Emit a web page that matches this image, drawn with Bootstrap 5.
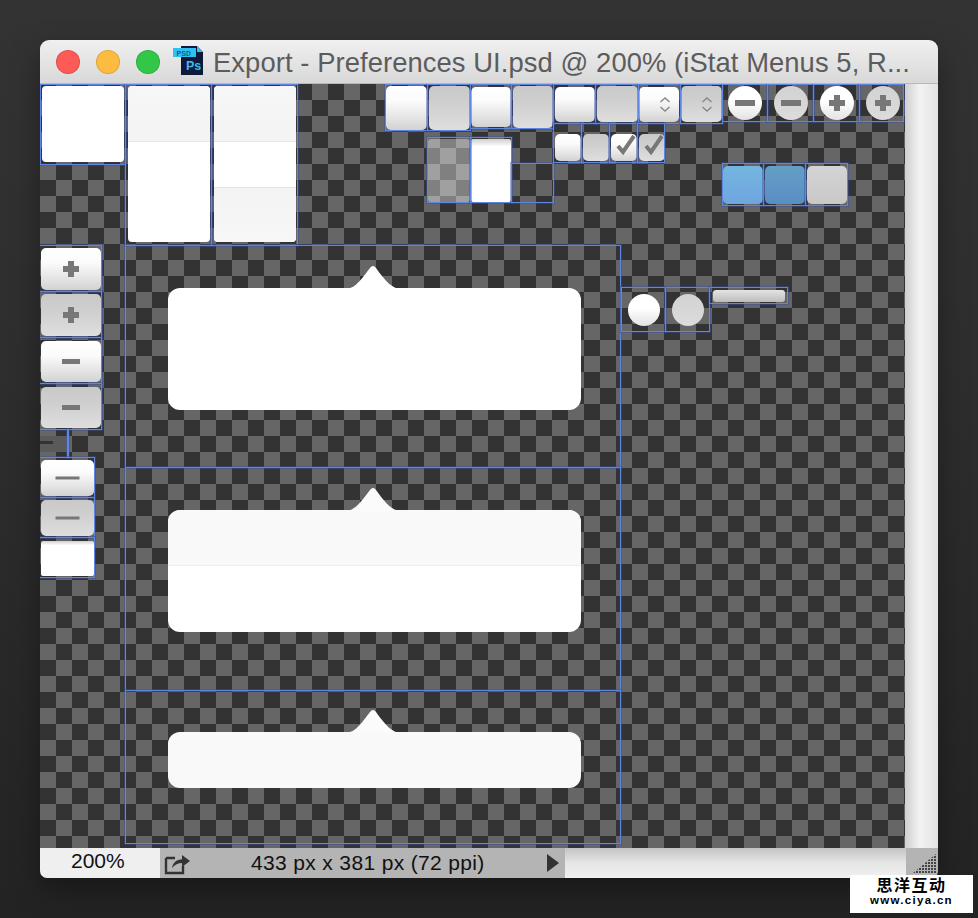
<!DOCTYPE html>
<html lang="en">
<head>
  <meta charset="UTF-8">
  <title>Export - Preferences UI.psd</title>
  <link rel="stylesheet" href="https://cdn.jsdelivr.net/npm/bootstrap@5.3.2/dist/css/bootstrap.min.css">
  <style>
    html, body { height: 100%; }
    body {
      background: linear-gradient(#333 0, #2e2e2e 40%, #232323 100%);
      overflow: hidden;
      font-family: "Liberation Sans", Arial, sans-serif;
    }
    .mac-window {
      margin: 40px 0 0 40px;
      width: 898px;
      height: 838px;
      border-radius: 9px 9px 7px 7px;
      overflow: hidden;
      box-shadow: 0 12px 30px rgba(0,0,0,.35);
    }
    .title-bar {
      height: 44px;
      padding-left: 16px;
      gap: 16px;
      background: linear-gradient(#f0f0f0, #d8d8d8);
      border-bottom: 1px solid #b8b8b8;
    }
    .light { width: 24px; height: 24px; border-radius: 50%; border: 1px solid rgba(0,0,0,.12); }
    .light-red { background: #fc5b57; }
    .light-yellow { background: #fdbc40; }
    .light-green { background: #33c748; }
    .ps-icon { margin-left: -3px; margin-top: -1px; }
    .title-text {
      width: 705px;
      margin-left: -6px;
      margin-top: 3px;
      color: #5c5c5c;
      font-size: 27.4px;
      letter-spacing: .07px;
      white-space: nowrap;
    }
    .work-area { height: 764px; }
    .psd-canvas {
      width: 865px;
      overflow: hidden;
      background-color: #333;
      background-image:
        conic-gradient(#666 25%, #333 0 50%, #666 0 75%, #333 0);
      background-size: 32px 32px;
    }
    .scroll-track { width: 33px; background: linear-gradient(90deg, #cfcfcf, #f3f3f3 45%, #e2e2e2); }
    .status-bar { height: 30px; font-size: 21px; color: #111; }
    .zoom-box { width: 120px; padding-left: 31px; background: #efefef; line-height: 26px; }
    .info-box { width: 405px; background: #b4b4b4; line-height: 30px; }
    .info-label { margin-left: 59px; width: 295px; letter-spacing: .35px; }
    .hbar { flex: 1; background: linear-gradient(#c4c4c4, #e6e6e6 50%, #f0f0f0); }
    .grip { width: 32px; background: #b4b4b4; padding: 0 1px 5px 0; }

    /* canvas pieces */
    .sp { position: absolute; }
    .sp svg { position: absolute; left: 0; top: 0; width: 100%; height: 100%; }
    .slice {
      position: absolute;
      border: 1px solid #5f86e0;
      box-shadow: 0 0 0 1px rgba(50,80,170,.45);
      pointer-events: none;
    }
    .white-card { background: #fff; border-radius: 4px; }
    .head-band { background: linear-gradient(#f7f7f7, #f3f3f3); border-bottom: 1px solid #e6e6e6; }
    .head-band-top { border-radius: 4px 4px 0 0; }
    .head-band-round { border-radius: 12px 12px 0 0; background: #f9f9f9; border-bottom: 1px solid #eee; }
    .foot-band { background: linear-gradient(#f3f3f3, #f7f7f7); border-radius: 0 0 4px 4px; border-top: 1px solid #e6e6e6; }
    .btn-up { background: linear-gradient(#fff, #fbfbfb 35%, #e6e6e6 70%, #d2d2d2); border-radius: 5px; filter: blur(.5px); }
    .btn-down { background: linear-gradient(#c9c9c9, #cfcfcf 40%, #d8d8d8 75%, #dedede); border-radius: 5px; filter: blur(.5px); }
    .btn-flat { background: linear-gradient(#cfcfcf 0, #fff 12%, #fff); border-radius: 2px; }
    .checker-dim { background: rgba(255,255,255,.38); border-radius: 3px; }
    .round-up { background: linear-gradient(#fff 45%, #e2e2e2); border-radius: 50%; filter: blur(.6px); }
    .round-down { background: linear-gradient(#d2d2d2, #dcdcdc); border-radius: 50%; filter: blur(.6px); }
    .blue-up { background: linear-gradient(#74b6e0, #6fa5e0); border-radius: 5px; filter: blur(.5px); }
    .blue-down { background: linear-gradient(#639fc6, #5a8ec4); border-radius: 5px; filter: blur(.5px); }
    .gray-tile { background: linear-gradient(#d4d4d4, #c8c8c8); border-radius: 5px; filter: blur(.5px); }
    .pill { background: linear-gradient(#e4e4e4, #bdbdbd); border-radius: 3px; filter: blur(.5px); }
    .callout-box { background: #fff; border-radius: 12px; }
    .callout-gray { background: #f9f9f9; border-radius: 12px; }
    .ghost-tile { background: #5a5a5a; }
    .ghost-bar { background: #333; }

    .watermark {
      position: absolute;
      left: 850px; top: 875px;
      width: 123px; height: 38px;
      background: #fff;
      color: #000;
      text-align: center;
      font-weight: 700;
    }
    .wm-cn { font: 700 16px/19px "Noto Sans CJK SC", sans-serif; letter-spacing: 1.5px; }
    .wm-en { font: 700 11.5px/13px "Liberation Sans", sans-serif; letter-spacing: 1.3px; }
  </style>
</head>
<body>
<div class="mac-window d-flex flex-column">
  <div class="title-bar d-flex align-items-center">
    <span class="light light-red"></span>
    <span class="light light-yellow"></span>
    <span class="light light-green"></span>
    <svg class="ps-icon" width="30" height="30" viewBox="0 0 30 30">
      <path d="M8 0H24L30 6V29H8Z" fill="#0e1a3a"/>
      <path d="M24 0L30 6H24Z" fill="#3fb9ee"/>
      <rect x="0" y="2" width="23" height="9" fill="#2fc0f2"/>
      <text x="3.5" y="9.5" font-family="Liberation Mono, monospace" font-size="8" fill="#0e3a5a">PSD</text>
      <text x="13" y="24" font-family="Liberation Sans, sans-serif" font-weight="700" font-size="12.5" fill="#3fb9ee">Ps</text>
    </svg>
    <span class="title-text">Export - Preferences UI.psd @ 200% (iStat Menus 5, R...</span>
  </div>

  <div class="work-area d-flex">
    <div class="psd-canvas position-relative" id="canvas"></div>
    <div class="scroll-track"></div>
  </div>

  <div class="status-bar d-flex">
    <div class="zoom-box">200%</div>
    <div class="info-box d-flex align-items-center position-relative">
      <svg class="ms-1" width="28" height="24" viewBox="0 0 28 24">
        <path d="M2 7H11M2 7V22H19V15" fill="none" stroke="#333" stroke-width="2.4"/>
        <path d="M8 17C9 11 13 8.5 18 8.5V4L26 10L18 16V12C14 12 11 13.5 8 17Z" fill="#333"/>
      </svg>
      <span class="info-label">433 px x 381 px (72 ppi)</span>
      <svg width="14" height="20" viewBox="0 0 14 20"><path d="M1 1L13 10L1 19Z" fill="#333"/></svg>
    </div>
    <div class="hbar"></div>
    <div class="grip d-flex align-items-end justify-content-end">
      <svg width="24" height="20" viewBox="0 0 24 20">
        <defs><pattern id="dots" width="3" height="3" patternUnits="userSpaceOnUse"><rect width="2" height="2" fill="#444"/></pattern></defs>
        <path d="M0 20L24 0V20Z" fill="url(#dots)"/>
      </svg>
    </div>
  </div>
</div>

<div class="watermark">
  <div class="wm-cn">思洋互动</div>
  <div class="wm-en">www.ciya.cn</div>
</div>

<script>
  // coordinates are page pixels, canvas starts at 40,84
  var OX = 40, OY = 84;
  function icon(w, h, body) {
    return '<svg viewBox="0 0 ' + w + ' ' + h + '">' + body + '</svg>';
  }
  function plusIcon(w, h) {
    var x = w / 2, y = h / 2;
    return icon(w, h, '<path d="M' + (x-8) + ' ' + y + 'H' + (x+8) + 'M' + x + ' ' + (y-8) + 'V' + (y+8) + '" stroke="#777" stroke-width="6"/>');
  }
  function minusIcon(w, h, len, th) {
    var x = w / 2, y = h / 2;
    return icon(w, h, '<path d="M' + (x-len) + ' ' + y + 'H' + (x+len) + '" stroke="#777" stroke-width="' + th + '"/>');
  }
  function stepper(w, h, cx, top) {
    return icon(w, h, '<path d="M' + (cx-4.5) + ' ' + (top+4) + 'L' + cx + ' ' + top + 'L' + (cx+4.5) + ' ' + (top+4) +
      'M' + (cx-4.5) + ' ' + (top+9) + 'L' + cx + ' ' + (top+13) + 'L' + (cx+4.5) + ' ' + (top+9) + '" fill="none" stroke="#888" stroke-width="1.4"/>');
  }
  var tick = icon(26, 27, '<path d="M7 12L12 18L23 2" fill="none" stroke="#777" stroke-width="4"/>');

  var pieces = [
    // white cards top left
    [42, 86, 82, 76, 'white-card'],
    [128, 86, 82, 156, 'white-card'],
    [128, 86, 82, 56, 'head-band head-band-top'],
    [214, 86, 82, 156, 'white-card'],
    [214, 86, 82, 56, 'head-band head-band-top'],
    [214, 187, 82, 55, 'foot-band'],
    // top button row
    [386, 86, 41, 44, 'btn-up'],
    [429, 86, 41, 44, 'btn-down'],
    [471, 87, 40, 40, 'btn-up'],
    [513, 86, 40, 42, 'btn-down'],
    [555, 87, 40, 35, 'btn-up'],
    [597, 86, 41, 36, 'btn-down'],
    [639, 87, 40, 35, 'btn-up', stepper(40, 35, 26, 11)],
    [681, 86, 41, 36, 'btn-down', stepper(41, 36, 26, 12)],
    // checker slot and flat white
    [428, 139, 42, 63, 'checker-dim'],
    [471, 139, 40, 63, 'btn-flat'],
    // checkboxes
    [555, 134, 26, 27, 'btn-up'],
    [583, 134, 26, 27, 'btn-down'],
    [611, 134, 26, 27, 'btn-up', tick],
    [639, 134, 26, 27, 'btn-down', tick],
    // round buttons
    [728, 86, 34, 34, 'round-up', minusIcon(34, 34, 10, 6)],
    [774, 86, 34, 34, 'round-down', minusIcon(34, 34, 10, 6)],
    [820, 86, 34, 34, 'round-up', plusIcon(34, 34)],
    [866, 86, 34, 34, 'round-down', plusIcon(34, 34)],
    // blue tiles
    [723, 166, 40, 38, 'blue-up'],
    [765, 166, 40, 38, 'blue-down'],
    [807, 166, 40, 38, 'gray-tile'],
    // slider knobs and track
    [628, 294, 32, 32, 'round-up'],
    [672, 294, 32, 32, 'round-down'],
    [713, 290, 72, 12, 'pill'],
    // left column buttons
    [41, 248, 60, 42, 'btn-up', plusIcon(60, 42)],
    [41, 294, 60, 42, 'btn-down', plusIcon(60, 42)],
    [41, 341, 60, 41, 'btn-up', minusIcon(60, 41, 9, 5)],
    [41, 387, 60, 41, 'btn-down', minusIcon(60, 41, 9, 5)],
    [41, 460, 53, 36, 'btn-up', minusIcon(53, 36, 12, 3)],
    [41, 500, 53, 36, 'btn-down', minusIcon(53, 36, 12, 3)],
    [41, 541, 53, 35, 'btn-flat'],
    // leftover bit under the left column
    [40, 436, 26, 16, 'ghost-tile'],
    [40, 441, 13, 3, 'ghost-bar'],
    // callouts
    [168, 288, 413, 122, 'callout-box'],
    [168, 510, 413, 122, 'callout-box'],
    [168, 510, 413, 56, 'head-band-round'],
    [168, 732, 413, 56, 'callout-gray']
  ];

  // arrows above the callouts
  var arrows = [[265, '#fff'], [487, '#fbfbfb'], [709, '#fbfbfb']];
  arrows.forEach(function (a) {
    pieces.push([346, a[0], 54, 24, '', icon(54, 24,
      '<path d="M0 24C8 23 12 19 24 3Q27 -1 30 3C40 17 46 23 54 24Z" fill="' + a[1] + '"/>')]);
  });

  var slices = [
    [40,84,86,81],[125,84,87,162],[211,84,87,162],
    [385,84,43,47],[427,84,44,47],[470,84,42,45],[511,84,43,45],
    [553,84,43,40],[595,84,44,40],[638,84,43,40],[680,84,43,40],
    [722,84,46,38],[767,84,47,38],[813,84,47,38],[859,84,45,38],
    [427,137,44,66],[470,137,42,66],[511,163,43,40],
    [553,123,29,40],[581,123,29,40],[609,123,29,40],[637,123,28,40],
    [722,163,42,43],[763,163,43,43],[805,163,43,43],
    [125,245,496,223],[125,467,496,224],[125,690,496,154],
    [621,287,45,45],[665,287,45,45],[709,287,79,17],
    [39,245,63,47],[39,291,63,47],[39,337,63,47],[39,383,63,47],
    [67,429,1,29],
    [39,457,56,41],[39,497,56,41],[39,537,56,41]
  ];

  var canvas = document.getElementById('canvas');
  function place(x, y, w, h, cls, html) {
    var el = document.createElement('div');
    el.className = cls;
    el.style.left = (x - OX) + 'px';
    el.style.top = (y - OY) + 'px';
    el.style.width = w + 'px';
    el.style.height = h + 'px';
    if (html) el.innerHTML = html;
    canvas.appendChild(el);
  }
  pieces.forEach(function (p) { place(p[0], p[1], p[2], p[3], 'sp ' + p[4], p[5]); });
  slices.forEach(function (s) { place(s[0], s[1], s[2], s[3], 'slice'); });
</script>
<script src="https://cdn.jsdelivr.net/npm/bootstrap@5.3.2/dist/js/bootstrap.bundle.min.js"></script>
</body>
</html>
